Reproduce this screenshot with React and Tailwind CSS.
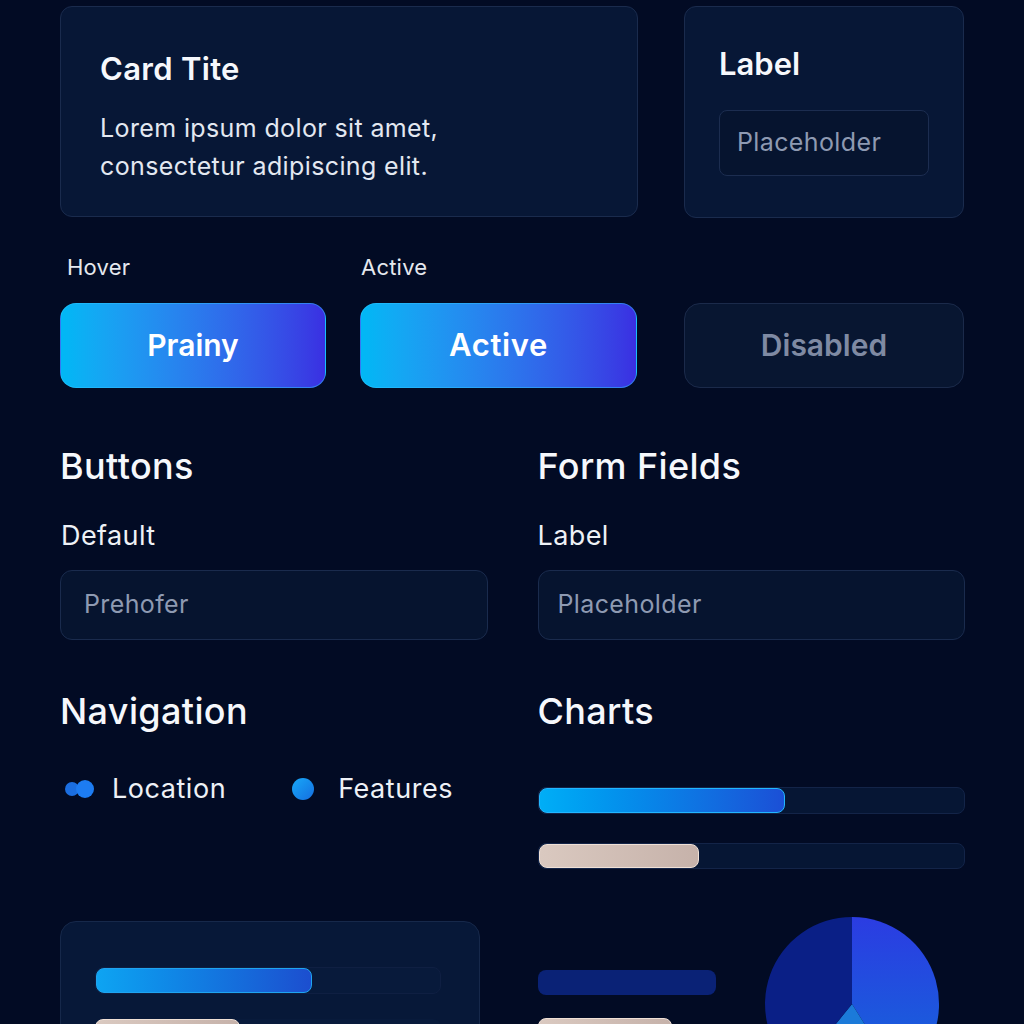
export default function App() {
  return (
    <div className="h-[1024px] overflow-hidden bg-[#020b24] px-[60px] pt-[6px] text-white font-['Inter',sans-serif]">
      {/* TOP CARDS */}
      <div className="flex gap-[46px]">
        <div className="w-[578px] h-[211px] rounded-xl border border-[#1a2b4d] bg-[#071736] pl-[39px] pt-[44px]">
          <h2 className="text-[31px] leading-[36px] font-semibold tracking-[0.01em] text-[#f6f8fc]">Card Tite</h2>
          <p className="mt-[22px] text-[25px] leading-[38px] tracking-[0.015em] text-[#e3e8f1]">
            Lorem ipsum dolor sit amet,
            <br />
            consectetur adipiscing elit.
          </p>
        </div>
        <div className="w-[280px] h-[212px] rounded-xl border border-[#1a2b4d] bg-[#071736] pl-[34px] pt-[39px]">
          <h2 className="text-[31px] leading-[36px] font-semibold text-[#f6f8fc]">Label</h2>
          <div className="mt-[28px] w-[210px] h-[66px] rounded-lg border border-[#1c2d50] bg-[#06142f] flex items-center px-[17px] text-[25px] tracking-[0.015em] text-[#8e9ab2]">
            Placeholder
          </div>
        </div>
      </div>

      {/* BUTTON STATES */}
      <div className="mt-[37px] flex">
        <div className="w-[266px]">
          <div className="pl-[7px] text-[22px] leading-[24px] tracking-[0.01em] text-[#e5e8ee]">Hover</div>
          <button className="mt-[24px] w-full h-[85px] rounded-2xl border border-[#2fc4ff]/50 bg-linear-to-r from-[#00b8f5] to-[#3a2fe2] text-[30px] font-semibold text-white">
            Prainy
          </button>
        </div>
        <div className="ml-[34px] w-[277px]">
          <div className="pl-[1px] text-[22px] leading-[24px] tracking-[0.01em] text-[#e5e8ee]">Active</div>
          <button className="mt-[24px] w-full h-[85px] rounded-2xl border border-[#2fc4ff]/50 bg-linear-to-r from-[#00b8f5] to-[#3a2fe2] text-[31px] font-semibold tracking-[0.02em] text-white">
            Active
          </button>
        </div>
        <div className="ml-[47px] w-[280px]">
          <div className="h-[24px]"></div>
          <button className="mt-[24px] w-full h-[85px] rounded-2xl border border-[#1b2a4a] bg-[#081631] text-[30px] font-semibold text-[#7f8aa3]">
            Disabled
          </button>
        </div>
      </div>

      {/* BUTTONS / FORM FIELDS */}
      <div className="mt-[57px] grid grid-cols-2 gap-[50px] w-[905px]">
        <div>
          <h3 className="text-[36px] leading-[42px] font-medium tracking-[0.01em] text-[#f6f8fc]">Buttons</h3>
          <div className="mt-[33px] pl-[1px] text-[27px] leading-[32px] tracking-[0.015em] text-[#eef1f6]">Default</div>
          <div className="mt-[18px] h-[70px] rounded-xl border border-[#1a2b4d] bg-[#06142f] flex items-center pl-[23px] text-[25px] tracking-[0.015em] text-[#8e9ab2]">
            Prehofer
          </div>
        </div>
        <div>
          <h3 className="text-[36px] leading-[42px] font-medium tracking-[0.01em] text-[#f6f8fc]">Form Fields</h3>
          <div className="mt-[33px] text-[27px] leading-[32px] tracking-[0.015em] text-[#eef1f6]">Label</div>
          <div className="mt-[18px] h-[70px] rounded-xl border border-[#1a2b4d] bg-[#06142f] flex items-center pl-[19px] text-[25px] tracking-[0.015em] text-[#8e9ab2]">
            Placeholder
          </div>
        </div>
      </div>

      {/* NAVIGATION / CHARTS */}
      <div className="mt-[50px] grid grid-cols-2 gap-[50px] w-[905px]">
        <div>
          <h3 className="text-[36px] leading-[42px] font-medium tracking-[0.01em] text-[#f6f8fc]">Navigation</h3>
          <div className="mt-[41px] flex items-center text-[27px] leading-[32px] tracking-[0.02em] text-[#eef1f6]">
            <span className="relative ml-[5px] w-[29px] h-[18px]">
              <span className="absolute left-0 top-[2px] w-[14px] h-[14px] rounded-full bg-[#1b6ee0]"></span>
              <span className="absolute left-[11px] top-0 w-[18px] h-[18px] rounded-full bg-[#1d7cf2]"></span>
            </span>
            <span className="ml-[18px]">Location</span>
            <span className="ml-[66px] w-[22px] h-[22px] rounded-full bg-linear-to-br from-[#1aa8f8] to-[#176ee0]"></span>
            <span className="ml-[24px]">Features</span>
          </div>
        </div>
        <div>
          <h3 className="text-[36px] leading-[42px] font-medium tracking-[0.01em] text-[#f6f8fc]">Charts</h3>
          <div className="mt-[55px] h-[27px] rounded-lg border border-[#132448] bg-[#061634]">
            <div className="w-[246px] h-full rounded-lg border border-[#22b6ff] bg-linear-to-r from-[#00aef6] to-[#1b4fd6]"></div>
          </div>
          <div className="mt-[29px] h-[26px] rounded-lg border border-[#132448] bg-[#061634]">
            <div className="w-[160px] h-full rounded-lg border border-[#efe0d6] bg-linear-to-r from-[#dac9c0] to-[#c6b2aa]"></div>
          </div>
        </div>
      </div>

      {/* BOTTOM ROW */}
      <div className="mt-[47px] flex">
        <div className="mt-[5px] w-[420px] h-[140px] rounded-2xl border border-[#16284a] bg-[#071838] pl-[34px] pt-[45px]">
          <div className="w-[346px] h-[27px] rounded-lg border border-[#0f1f42] bg-[#081a3b]">
            <div className="w-[216px] h-full rounded-lg border border-[#1fa4f0] bg-linear-to-r from-[#0ea4f2] to-[#1c4ecf]"></div>
          </div>
          <div className="mt-[25px] w-[346px] h-[27px] rounded-lg bg-[#081a3b]">
            <div className="w-[145px] h-full rounded-lg border border-[#efe0d6] bg-linear-to-r from-[#dac9c0] to-[#c6b2aa]"></div>
          </div>
        </div>
        <div className="ml-[58px] flex">
          <div className="pt-[54px]">
            <div className="w-[178px] h-[25px] rounded-lg bg-[#0a2276]"></div>
            <div className="mt-[23px] w-[134px] h-[26px] rounded-lg border border-[#efe0d6] bg-linear-to-r from-[#dac9c0] to-[#c6b2aa]"></div>
          </div>
          <svg className="ml-[48px]" width="176" height="176" viewBox="0 0 176 176">
            <defs>
              <linearGradient id="pieRight" x1="0" y1="0" x2="0" y2="1">
                <stop offset="0" stopColor="#2b3ce2" />
                <stop offset="1" stopColor="#1467da" />
              </linearGradient>
            </defs>
            <path d="M88 88 L88 1 A87 87 0 0 1 134.1 161.8 Z" fill="url(#pieRight)" />
            <path d="M88 88 L134.1 161.8 A87 87 0 0 1 33.25 155.6 Z" fill="#1b7ad9" />
            <path d="M88 88 L33.25 155.6 A87 87 0 0 1 88 1 Z" fill="#0a1f86" />
          </svg>
        </div>
      </div>
    </div>
  );
}
